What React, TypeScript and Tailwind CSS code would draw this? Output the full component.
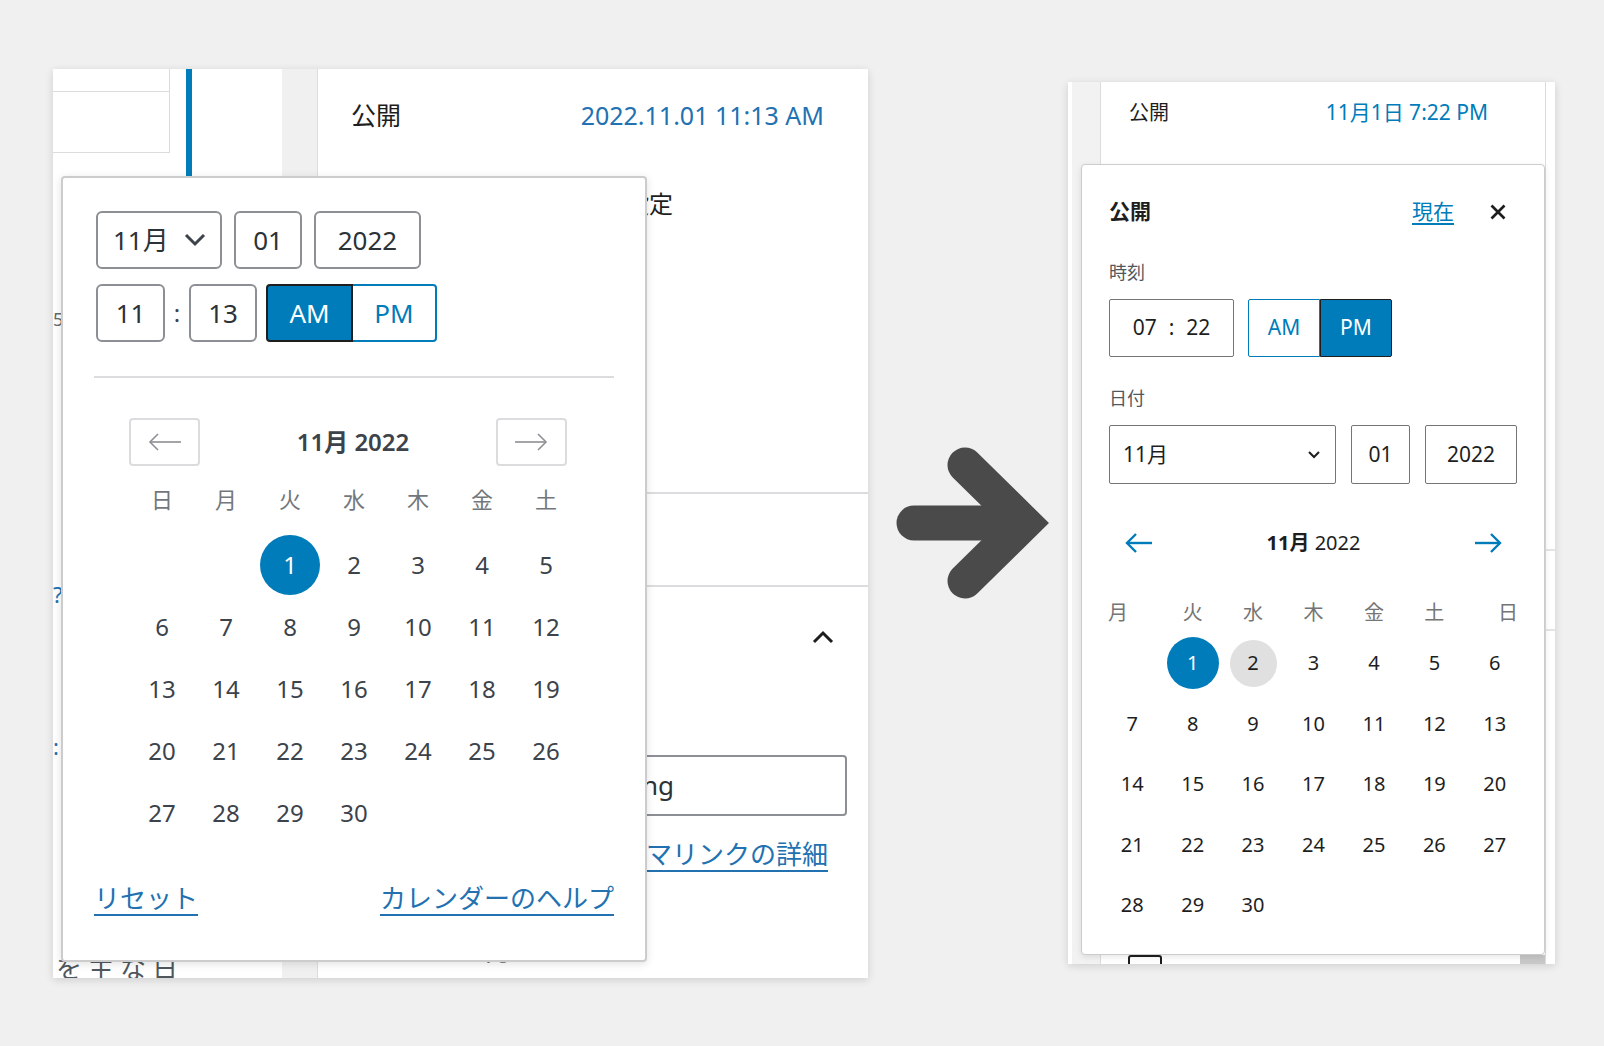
import React from 'react';

const FONT = "[font-family:'Noto_Sans','Noto_Sans_CJK_JP',sans-serif]";

// November 2022 starts on a Tuesday
const NOV_DAYS = Array.from({ length: 30 }, (_, i) => i + 1);

function ArrowIcon({ dir, className }: { dir: 'left' | 'right'; className?: string }) {
  return (
    <svg viewBox="0 0 34 18" className={className} fill="none" stroke="currentColor" strokeWidth={1.6}>
      {dir === 'left' ? (
        <>
          <line x1="2" y1="9" x2="33" y2="9" />
          <polyline points="10,1 2,9 10,17" />
        </>
      ) : (
        <>
          <line x1="1" y1="9" x2="32" y2="9" />
          <polyline points="24,1 32,9 24,17" />
        </>
      )}
    </svg>
  );
}

function BlueArrow({ dir }: { dir: 'left' | 'right' }) {
  return (
    <svg viewBox="0 0 28 22" className="w-[28px] h-[22px] text-[#007cba]" fill="none" stroke="currentColor" strokeWidth={2.4}>
      {dir === 'left' ? (
        <>
          <line x1="2" y1="11" x2="27" y2="11" />
          <polyline points="11,2 2,11 11,20" />
        </>
      ) : (
        <>
          <line x1="1" y1="11" x2="26" y2="11" />
          <polyline points="17,2 26,11 17,20" />
        </>
      )}
    </svg>
  );
}

function ClassicPicker() {
  const box = 'border-2 border-[#8c8f94] rounded-[6px] flex items-center justify-center text-[26px] text-[#2c3338] bg-white';
  const cells: (number | null)[] = [null, null, ...NOV_DAYS];
  return (
    <div className="absolute left-[8px] top-[107px] w-[586px] h-[786px] bg-white border-2 border-[#cccccc] rounded-[4px] shadow-[0_2px_8px_rgba(0,0,0,0.12)] px-[33px] pt-[33px]">
      <div className="flex gap-[12px] h-[58px]">
        <div className={`${box} w-[126px] !justify-between pl-[15px] pr-[14px]`}>
          <span>11月</span>
          <svg viewBox="0 0 22 14" className="w-[22px] h-[14px]" fill="none" stroke="#3c434a" strokeWidth={3}>
            <polyline points="2,2 11,11 20,2" />
          </svg>
        </div>
        <div className={`${box} w-[68px]`}>01</div>
        <div className={`${box} w-[107px]`}>2022</div>
      </div>

      <div className="mt-[15px] flex items-center h-[58px]">
        <div className={`${box} w-[69px] h-full`}>11</div>
        <div className="w-[24px] text-center text-[24px] text-[#3c434a]">:</div>
        <div className={`${box} w-[68px] h-full`}>13</div>
        <div className="ml-[9px] flex h-full">
          <div className="w-[87px] h-full flex items-center justify-center bg-[#007cba] border-2 border-[#1e1e1e] rounded-l-[4px] text-white text-[26px]">
            AM
          </div>
          <div className="w-[84px] h-full flex items-center justify-center border-2 border-l-0 border-[#007cba] rounded-r-[4px] text-[#007cba] text-[26px]">
            PM
          </div>
        </div>
      </div>

      <div className="mt-[34px] -mx-[2px] h-[2px] bg-[#dcdcde]" />

      <div className="mt-[40px] ml-[33px] mr-[45px] h-[48px] flex items-center justify-between">
        <div className="w-[71px] h-[48px] border-2 border-[#dcdcde] rounded-[4px] flex items-center justify-center">
          <ArrowIcon dir="left" className="w-[34px] h-[18px] text-[#8c8f94]" />
        </div>
        <div className="pl-[10px] text-[24px] font-semibold text-[#3c434a]">11月 2022</div>
        <div className="w-[71px] h-[48px] border-2 border-[#dcdcde] rounded-[4px] flex items-center justify-center">
          <ArrowIcon dir="right" className="w-[34px] h-[18px] text-[#8c8f94]" />
        </div>
      </div>

      <div className="mt-[2px] ml-[34px] w-[448px] grid grid-cols-7 h-[62px] items-center text-center text-[22px] text-[#72777c]">
        {['日', '月', '火', '水', '木', '金', '土'].map((d) => (
          <div key={d}>{d}</div>
        ))}
      </div>
      <div className="mt-[4px] ml-[34px] w-[448px] grid grid-cols-7 auto-rows-[62px] text-[24px] text-[#3c434a]">
        {cells.map((d, i) => (
          <div key={i} className="flex items-center justify-center">
            {d === 1 ? (
              <div className="w-[60px] h-[60px] rounded-full bg-[#007cba] text-white flex items-center justify-center">1</div>
            ) : (
              d
            )}
          </div>
        ))}
      </div>

      <div className="mt-[35px] -mx-[2px] flex justify-between text-[26px] text-[#2271b1] underline decoration-2 underline-offset-[6px]">
        <span>リセット</span>
        <span>カレンダーのヘルプ</span>
      </div>
    </div>
  );
}

function ClassicScreen() {
  return (
    <div className="relative w-[815px] h-[909px] bg-white overflow-hidden shadow-[0_2px_8px_rgba(0,0,0,0.14)] flex">
      {/* post list column */}
      <div className="w-[229px] h-full flex flex-col">
        <div className="flex">
          <div className="w-[117px] h-[84px] border-r border-b border-[#dcdcde]">
            <div className="h-[23px] border-b border-[#dcdcde]" />
          </div>
          <div className="ml-[16px] w-[6px] h-[110px] bg-[#007cba]" />
        </div>
        <div className="-mt-[4px] w-[140px] h-[2px] bg-[#dcdcde]" />
        <div className="mt-[122px] h-[2px] w-[40px] bg-[#c3c4c7]" />
        <div className="h-[44px] text-[18px] leading-[44px] text-[#646970]">5</div>
        <div className="h-[2px] w-[40px] bg-[#c3c4c7]" />
        <div className="mt-[243px] h-[20px] text-[22px] leading-[20px] text-[#2271b1]">?</div>
        <div className="mt-[2px] h-[10px] w-[40px] bg-[#ffe082]" />
        <div className="mt-[130px] text-[22px] leading-[20px] text-[#2271b1]">:</div>
        <div className="mt-[193px] pl-[3px] text-[26px] tracking-[6px] text-[#50575e] whitespace-nowrap">を主な日</div>
      </div>
      <div className="w-[36px] h-full bg-[#f0f0f0] border-r border-[#dcdcde]" />

      {/* publish box column */}
      <div className="flex-1 h-full flex flex-col">
        <div className="mt-[30px] h-[34px] pl-[33px] pr-[44px] flex items-center justify-between">
          <span className="text-[25px] text-[#1e1e1e]">公開</span>
          <span className="text-[25px] text-[#2271b1]">2022.11.01 11:13 AM</span>
        </div>
        <div className="mt-[54px] pl-[33px] h-[34px] flex items-center">
          <div className="w-[322px] text-right whitespace-nowrap text-[24px] text-[#1e1e1e]">公開日時を設定</div>
        </div>
        <div className="mt-[271px] h-[2px] bg-[#dcdcde]" />
        <div className="mt-[91px] h-[2px] bg-[#dcdcde]" />
        <div className="mt-[43px] h-[24px] flex justify-end pr-[34px]">
          <svg viewBox="0 0 22 14" className="w-[22px] h-[14px]" fill="none" stroke="#1e1e1e" strokeWidth={3}>
            <polyline points="2,12 11,3 20,12" />
          </svg>
        </div>
        <div className="mt-[101px] ml-[33px] mr-[21px] h-[61px] shrink-0 border-2 border-[#8c8f94] rounded-[4px] flex items-center">
          <div className="w-[321px] text-right whitespace-nowrap overflow-hidden text-[26px] text-[#2c3338]">sample-posting</div>
        </div>
        <div className="mt-[19px] pl-[276px] text-[26px] text-[#2271b1] underline decoration-2 underline-offset-[6px] whitespace-nowrap">
          パーマリンクの詳細
        </div>
        <div className="mt-[61px] pl-[30px] text-[22px] text-[#1e1e1e] whitespace-nowrap">カテゴリー 一覧</div>
      </div>

      <ClassicPicker />
    </div>
  );
}

function BlockPicker() {
  const cells: (number | null)[] = [null, ...NOV_DAYS];
  const week = ['月', '火', '水', '木', '金', '土', '日'];
  return (
    <div className="absolute left-[13px] top-[82px] w-[464px] h-[791px] bg-white border border-[#cccccc] rounded-[4px] shadow-[0_2px_6px_rgba(0,0,0,0.1)] px-[27px] pt-[31px]">
      <div className="h-[32px] flex items-center justify-between">
        <span className="text-[21px] font-bold text-[#1e1e1e]">公開</span>
        <div className="flex items-center">
          <span className="text-[21px] text-[#007cba] underline underline-offset-[4px]">現在</span>
          <svg viewBox="0 0 16 16" className="ml-[36px] mr-[11px] w-[16px] h-[16px]" fill="none" stroke="#1e1e1e" strokeWidth={2.6}>
            <line x1="1.5" y1="1.5" x2="14.5" y2="14.5" />
            <line x1="14.5" y1="1.5" x2="1.5" y2="14.5" />
          </svg>
        </div>
      </div>

      <div className="mt-[32px] h-[24px] leading-[24px] text-[18px] text-[#50575e]">時刻</div>
      <div className="mt-[15px] h-[58px] flex">
        <div className="w-[125px] h-full border-[1.5px] border-[#757575] rounded-[2px] flex items-center justify-center gap-[12px] text-[21px] text-[#1e1e1e]">
          <span>07</span>
          <span>:</span>
          <span>22</span>
        </div>
        <div className="ml-[14px] flex h-full">
          <div className="w-[72px] h-full flex items-center justify-center border border-[#007cba] rounded-l-[2px] text-[21px] text-[#007cba]">
            AM
          </div>
          <div className="w-[72px] h-full flex items-center justify-center bg-[#007cba] border-[1.5px] border-[#1e1e1e] rounded-r-[2px] text-[21px] text-white">
            PM
          </div>
        </div>
      </div>

      <div className="mt-[29px] h-[24px] leading-[24px] text-[18px] text-[#50575e]">日付</div>
      <div className="mt-[15px] h-[59px] flex">
        <div className="w-[227px] h-full border-[1.5px] border-[#757575] rounded-[2px] flex items-center justify-between pl-[13px] pr-[14px] text-[21px] text-[#1e1e1e]">
          <span>11月</span>
          <svg viewBox="0 0 14 10" className="w-[14px] h-[10px]" fill="none" stroke="#1e1e1e" strokeWidth={2}>
            <polyline points="2,2 7,7 12,2" />
          </svg>
        </div>
        <div className="ml-[15px] w-[59px] h-full border-[1.5px] border-[#757575] rounded-[2px] flex items-center justify-center text-[21px] text-[#1e1e1e]">
          01
        </div>
        <div className="ml-[15px] w-[92px] h-full border-[1.5px] border-[#757575] rounded-[2px] flex items-center justify-center text-[21px] text-[#1e1e1e]">
          2022
        </div>
      </div>

      <div className="mt-[39px] h-[40px] flex items-center justify-between pl-[16px] pr-[15px]">
        <BlueArrow dir="left" />
        <div className="text-[20px] text-[#1e1e1e]">
          <span className="font-bold">11月</span> 2022
        </div>
        <BlueArrow dir="right" />
      </div>

      <div className="mt-[30px] -ml-[7px] w-[423px] h-[40px] grid grid-cols-7 items-center text-[20px] text-[#757575]">
        {week.map((d, i) => (
          <div
            key={d}
            className={i === 0 ? 'justify-self-start pl-[6px]' : i === 6 ? 'justify-self-end pr-[7px]' : 'justify-self-center'}
          >
            {d}
          </div>
        ))}
      </div>
      <div className="-ml-[7px] w-[423px] grid grid-cols-7 auto-rows-[60.5px] text-[20px] text-[#1e1e1e]">
        {cells.map((d, i) => (
          <div key={i} className="flex items-center justify-center">
            {d === 1 ? (
              <div className="w-[52px] h-[52px] rounded-full bg-[#007cba] text-white flex items-center justify-center">1</div>
            ) : d === 2 ? (
              <div className="w-[47px] h-[47px] rounded-full bg-[#e0e0e0] flex items-center justify-center">2</div>
            ) : (
              d
            )}
          </div>
        ))}
      </div>
    </div>
  );
}

function BlockScreen() {
  return (
    <div className="relative w-[487px] h-[882px] bg-white overflow-hidden shadow-[0_2px_8px_rgba(0,0,0,0.14)] flex">
      <div className="w-[4px] h-full bg-white" />
      <div className="w-[29px] h-full bg-[#f2f2f2] border-r border-[#dcdcde]" />
      <div className="flex-1 h-full flex flex-col">
        <div className="mt-[17px] h-[28px] pl-[28px] pr-[57px] flex items-center justify-between">
          <span className="text-[20px] text-[#1e1e1e]">公開</span>
          <span className="text-[21px] text-[#007cba]">11月1日 7:22 PM</span>
        </div>
        <div className="mt-auto h-[9px] flex items-start">
          <div className="ml-[27px] w-[34px] h-[14px] border-2 border-[#1e1e1e] rounded-[3px]" />
          <div className="ml-auto w-[25px] h-full bg-[#c8c8c8]" />
        </div>
      </div>
      <div className="w-[10px] h-full border-l border-[#dcdcde] bg-white flex flex-col">
        <div className="mt-[467px] h-[2px] bg-[#e4e4e4]" />
        <div className="mt-[78px] h-[2px] bg-[#e4e4e4]" />
      </div>

      <BlockPicker />
    </div>
  );
}

export default function App() {
  return (
    <div className={`w-[1604px] h-[1046px] bg-[#f0f0f0] flex items-start ${FONT}`}>
      <div className="ml-[53px] mt-[69px]">
        <ClassicScreen />
      </div>
      <svg viewBox="0 0 165 165" className="ml-[22px] mt-[440px] w-[165px] h-[165px]" fill="none" stroke="#4a4a4a" strokeWidth={35}>
        <line x1="24" y1="83" x2="120" y2="83" strokeLinecap="round" />
        <polyline points="75,25 134,83 75,141" strokeLinecap="round" strokeLinejoin="miter" />
      </svg>
      <div className="ml-[13px] mt-[82px]">
        <BlockScreen />
      </div>
    </div>
  );
}
